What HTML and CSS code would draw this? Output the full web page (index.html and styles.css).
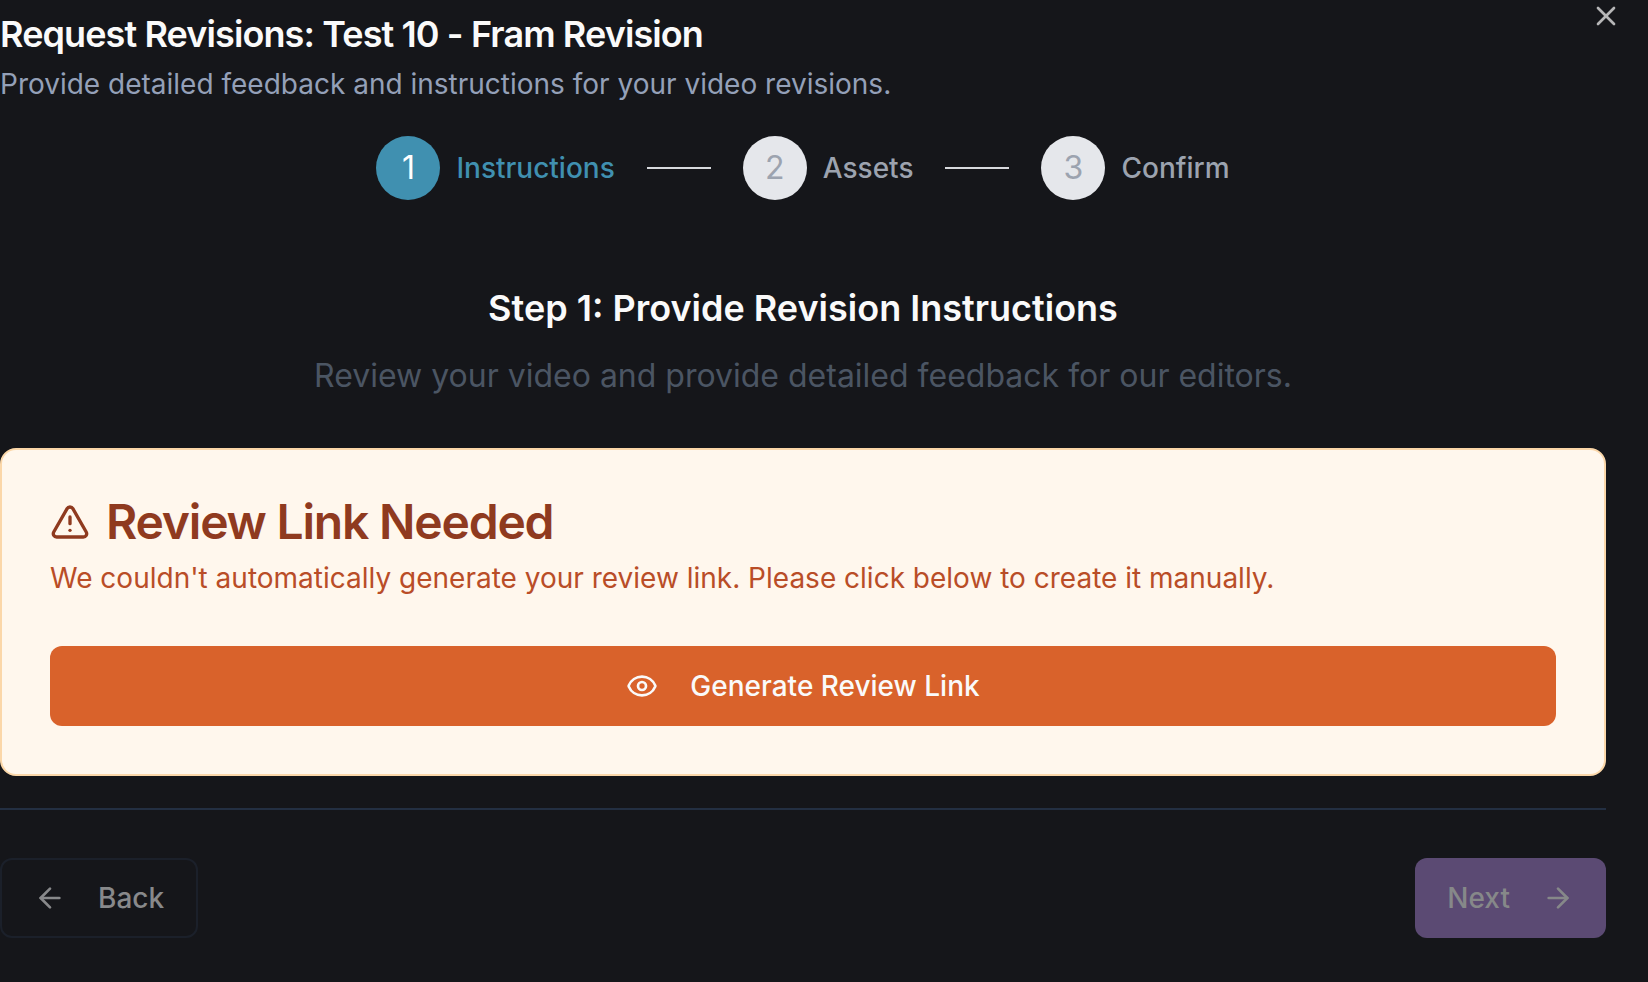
FILE: index.html
```html
<!DOCTYPE html>
<html lang="en">
<head>
<meta charset="utf-8">
<title>Request Revisions</title>
<link rel="stylesheet" href="styles.css">
</head>
<body>
<main class="dialog">
  <button class="close" aria-label="Close">
    <svg class="icon" viewBox="0 0 24 24"><path d="M18 6 6 18"/><path d="m6 6 12 12"/></svg>
  </button>
  <header class="header">
    <h1 class="title">Request Revisions: Test 10 - Fram Revision</h1>
    <p class="description">Provide detailed feedback and instructions for your video revisions.</p>
  </header>
  <nav class="stepper">
    <div class="step step-active"><span class="step-number">1</span><span class="step-label">Instructions</span></div>
    <span class="step-line"></span>
    <div class="step"><span class="step-number">2</span><span class="step-label">Assets</span></div>
    <span class="step-line"></span>
    <div class="step"><span class="step-number">3</span><span class="step-label">Confirm</span></div>
  </nav>
  <section class="intro">
    <h2 class="intro-title">Step 1: Provide Revision Instructions</h2>
    <p class="intro-text">Review your video and provide detailed feedback for our editors.</p>
  </section>
  <section class="card">
    <h3 class="card-title">
      <svg class="icon icon-alert" viewBox="0 0 24 24"><path d="m21.73 18-8-14a2 2 0 0 0-3.48 0l-8 14A2 2 0 0 0 4 21h16a2 2 0 0 0 1.73-3"/><path d="M12 9v4"/><path d="M12 17h.01"/></svg>
      <span>Review Link Needed</span>
    </h3>
    <p class="card-text">We couldn't automatically generate your review link. Please click below to create it manually.</p>
    <button class="button button-generate">
      <svg class="icon" viewBox="0 0 24 24"><path d="M2.062 12.348a1 1 0 0 1 0-.696 10.75 10.75 0 0 1 19.876 0 1 1 0 0 1 0 .696 10.75 10.75 0 0 1-19.876 0"/><circle cx="12" cy="12" r="3"/></svg>
      <span>Generate Review Link</span>
    </button>
  </section>
  <footer class="footer">
    <button class="button button-back" disabled>
      <svg class="icon" viewBox="0 0 24 24"><path d="m12 19-7-7 7-7"/><path d="M19 12H5"/></svg>
      <span>Back</span>
    </button>
    <button class="button button-next" disabled>
      <span>Next</span>
      <svg class="icon" viewBox="0 0 24 24"><path d="M5 12h14"/><path d="m12 5 7 7-7 7"/></svg>
    </button>
  </footer>
</main>
</body>
</html>
```
FILE: styles.css
```css
* { box-sizing: border-box; margin: 0; }
body {
  background: #15161a;
  color: #fafafa;
  font-family: Inter, sans-serif;
  font-size: 28px;
  line-height: 40px;
  overflow: hidden;
}
button { font: inherit; letter-spacing: inherit; border: 0; padding: 0; background: none; color: inherit; }
.dialog { position: relative; width: 1606px; height: 982px; padding-top: 16px; }
.icon {
  display: block; flex: none; width: 32px; height: 32px;
  fill: none; stroke: currentColor; stroke-width: 2; stroke-linecap: round; stroke-linejoin: round;
}
.close { position: absolute; top: 0; right: -16px; opacity: 0.7; }
.header { display: flex; flex-direction: column; gap: 12px; }
.title { font-size: 36px; line-height: 36px; font-weight: 600; letter-spacing: -0.025em; }
.description { color: #94a0b8; }
.stepper { display: flex; justify-content: center; align-items: center; gap: 32px; margin-top: 32px; }
.step { display: flex; align-items: center; gap: 16px; color: #9ca3af; }
.step-number {
  display: flex; align-items: center; justify-content: center;
  width: 64px; height: 64px; border-radius: 50%;
  background: #e5e7eb; font-size: 32px; line-height: 48px;
}
.step-label { font-weight: 500; }
.step-active { color: #4090b0; }
.step-active .step-number { background: #4090b0; color: #fff; }
.step-line { width: 64px; height: 2px; background: #d7d9dd; }
.intro { display: flex; flex-direction: column; gap: 16px; margin-top: 80px; text-align: center; }
.intro-title { font-size: 36px; line-height: 56px; font-weight: 600; }
.intro-text { font-size: 32px; line-height: 48px; color: #4b5563; }
.card {
  margin-top: 48px; padding: 48px; border: 2px solid #fbd7a9; border-radius: 16px;
  background: #fff7ed; color: #9a3412;
}
.card-title {
  display: flex; align-items: center; gap: 16px; color: #8f3a1f;
  font-size: 48px; line-height: 48px; font-weight: 600; letter-spacing: -0.025em;
}
.icon-alert { width: 40px; height: 40px; }
.card-text { margin-top: 12px; color: #b94d27; }
.button {
  display: flex; align-items: center; justify-content: center; gap: 32px;
  height: 80px; padding: 0 32px; border-radius: 12px; font-weight: 500;
}
.button-generate { width: 100%; margin-top: 48px; background: #d9622b; color: #fafafa; }
.footer {
  display: flex; justify-content: space-between;
  margin-top: 32px; padding-top: 48px; border-top: 2px solid #232f42;
}
.button-back { border: 2px solid #1b202a; color: #88898b; }
.button-next { background: #5b4a73; color: #868889; }
```
